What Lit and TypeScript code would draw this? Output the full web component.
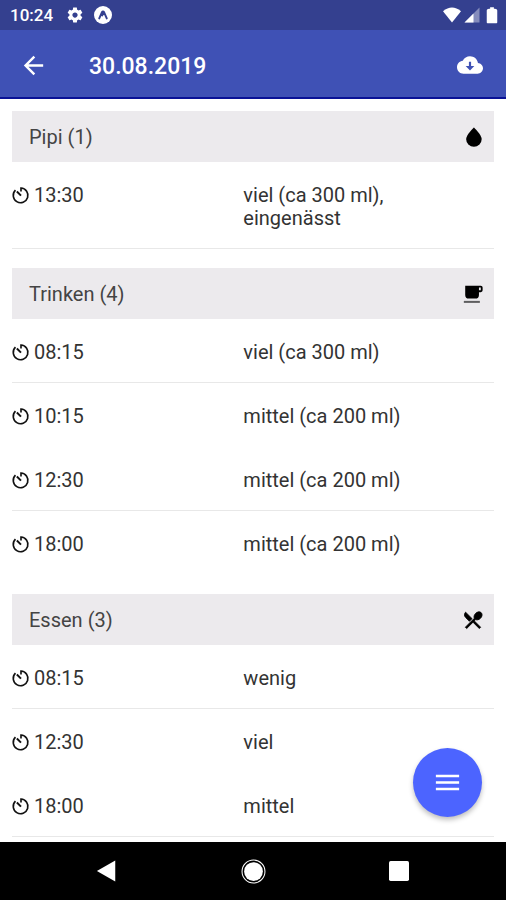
import { LitElement, html, css, svg, TemplateResult } from "lit";
import { customElement, property } from "lit/decorators.js";

interface Entry {
  time: string;
  value: string;
}

interface Section {
  title: string;
  icon: string;
  entries: Entry[];
}

const sections: Section[] = [
  {
    title: "Pipi",
    icon: "drop",
    entries: [{ time: "13:30", value: "viel (ca 300 ml), eingenässt" }],
  },
  {
    title: "Trinken",
    icon: "cup",
    entries: [
      { time: "08:15", value: "viel (ca 300 ml)" },
      { time: "10:15", value: "mittel (ca 200 ml)" },
      { time: "12:30", value: "mittel (ca 200 ml)" },
      { time: "18:00", value: "mittel (ca 200 ml)" },
    ],
  },
  {
    title: "Essen",
    icon: "cutlery",
    entries: [
      { time: "08:15", value: "wenig" },
      { time: "12:30", value: "viel" },
      { time: "18:00", value: "mittel" },
    ],
  },
];

const glyphs: Record<string, TemplateResult> = {
  drop: svg`<path d="M13 1.500C13 1.500 4.500 9.500 4.500 14.200A8.500 8.300 0 0 0 21.500 14.200C21.500 9.500 13 1.500 13 1.500Z"/>`,
  cup: svg`<path fill-rule="evenodd" d="M3.500 3H20.500a2 2 0 0 1 2 2v3a2 2 0 0 1-2 2H18.500v3a4 4 0 0 1-4 4H7.500a4 4 0 0 1-4-4zM18.500 5v3h2V5z"/><path opacity="0.600" d="M2 19.500h17.500v2.200H2z"/>`,
  cutlery: svg`<path stroke="currentColor" stroke-width="1" d="M8.100 13.340l2.830-2.830L3.910 3.500c-1.560 1.560-1.560 4.090 0 5.660l4.190 4.180zm6.780-1.810c1.530.71 3.680.21 5.270-1.380 1.910-1.910 2.280-4.650.81-6.120-1.460-1.460-4.200-1.100-6.120.81-1.590 1.590-2.090 3.740-1.380 5.270L3.700 19.870l1.410 1.410L12 14.410l6.880 6.880 1.410-1.410L13.410 13l1.470-1.470z"/>`,
  timer: svg`<g fill="none" stroke="currentColor" stroke-width="2.200"><path d="M4.600 4.200A9.800 9.800 0 1 0 12 1.400V6"/><path stroke-width="2.600" d="M6.500 6L12 11.500"/></g>`,
  back: svg`<path d="M20 11H7.830l5.590-5.590L12 4l-8 8 8 8 1.410-1.410L7.830 13H20v-2z"/>`,
  cloud: svg`<path fill-rule="evenodd" d="M19.350 10.040C18.670 6.590 15.640 4 12 4 9.110 4 6.600 5.640 5.350 8.040 2.340 8.360 0 10.910 0 14c0 3.310 2.690 6 6 6h13c2.760 0 5-2.240 5-5 0-2.640-2.050-4.780-4.650-4.960zM11 9h2v4h3l-4 4-4-4h3z"/>`,
  menu: svg`<path d="M3 18h18v-2H3v2zm0-5h18v-2H3v2zm0-7v2h18V6H3z"/>`,
  gear: svg`<path d="M19.430 12.980c.04-.32.07-.64.07-.98s-.03-.66-.07-.98l2.110-1.650c.19-.15.24-.42.12-.64l-2-3.460c-.12-.22-.39-.3-.61-.22l-2.490 1c-.52-.4-1.080-.73-1.690-.98l-.38-2.650C14.460 2.180 14.250 2 14 2h-4c-.25 0-.46.18-.49.42l-.38 2.650c-.61.25-1.170.59-1.690.98l-2.490-1c-.23-.09-.49 0-.61.22l-2 3.460c-.13.22-.07.49.12.64l2.110 1.650c-.04.32-.07.65-.07.98s.03.66.07.98l-2.110 1.650c-.19.15-.24.42-.12.64l2 3.460c.12.22.39.3.61.22l2.490-1c.52.4 1.080.73 1.690.98l.38 2.650c.03.24.24.42.49.42h4c.25 0 .46-.18.49-.42l.38-2.650c.61-.25 1.170-.59 1.690-.98l2.490 1c.23.09.49 0 .61-.22l2-3.460c.12-.22.07-.49-.12-.64l-2.110-1.650zM12 15.500c-1.930 0-3.500-1.570-3.500-3.500s1.570-3.500 3.500-3.500 3.500 1.570 3.500 3.500-1.570 3.500-3.500 3.500z"/>`,
  badge: svg`<circle cx="12" cy="12" r="12"/><path fill="none" stroke="#34408f" stroke-width="2.600" stroke-linecap="round" stroke-linejoin="round" d="M7 16.500L10.500 8.500Q12 6 13.500 8.500L17 16.500M11 12.500L12 10"/>`,
  wifi: svg`<path d="M0 7Q12-3 24 7L12 22z"/>`,
  signal: svg`<path opacity="0.400" d="M2 22H22V2z"/><path d="M2 22H14V10z"/>`,
  battery: svg`<path d="M16 3.500h-1.500V1.500h-5v2H8C6.500 3.500 5 4.500 5 6v15.500c0 1 .5 1.500 1.500 1.500h11c1 0 1.500-.5 1.500-1.500V6c0-1.500-1.500-2.500-3-2.500z"/>`,
  navBack: svg`<path d="M1 12L21 0.500V23.500z"/>`,
  navHome: svg`<circle cx="12" cy="12" r="9"/><circle cx="12" cy="12" r="11" fill="none" stroke="currentColor" stroke-width="1"/>`,
  navRecent: svg`<rect x="0" y="0" width="24" height="24" rx="2"/>`,
};

@customElement("ui-icon")
export class UiIcon extends LitElement {
  @property() name = "";

  static styles = css`
    :host {
      display: block;
      flex: none;
    }
    .glyph {
      display: block;
      width: 100%;
      height: 100%;
      fill: currentColor;
    }
  `;

  render() {
    return html`<svg class="glyph" viewBox="0 0 24 24" aria-hidden="true">${glyphs[this.name]}</svg>`;
  }
}

@customElement("app-root")
export class AppRoot extends LitElement {
  static styles = css`
    :host {
      display: flex;
      flex-direction: column;
      height: 100vh;
      overflow: hidden;
      background: #fff;
      color: #333;
      font-family: Roboto, "Noto Sans", sans-serif;
      font-size: 20px;
      line-height: 23px;
    }
    button {
      display: flex;
      align-items: center;
      justify-content: center;
      padding: 0;
      border: 0;
      background: none;
      color: inherit;
      cursor: pointer;
    }
    .status {
      flex: none;
      display: flex;
      align-items: center;
      gap: 10px;
      height: 30px;
      padding: 0 5px 0 10px;
      background: #34408f;
      color: #fff;
      font-size: 17px;
      font-weight: 500;
    }
    .time {
      margin-right: 3px;
    }
    .right {
      display: flex;
      align-items: center;
      gap: 2px;
      margin-left: auto;
    }
    .icon-status {
      width: 18px;
      height: 18px;
    }
    .bar {
      flex: none;
      display: flex;
      align-items: center;
      padding: 3px 23px 0 19px;
      height: 64px;
      border-bottom: 2px solid #0a1296;
      background: #3f51b5;
      color: #fff;
    }
    .title {
      flex: 1;
      margin: 0 0 0 41px;
      padding-top: 4px;
      font-size: 23px;
      line-height: 28px;
      font-weight: 500;
    }
    .icon-bar {
      width: 29px;
      height: 29px;
    }
    .icon-cloud {
      width: 26px;
      height: 26px;
    }
    .body {
      position: relative;
      flex: 1;
      min-height: 0;
      display: flex;
      flex-direction: column;
    }
    .list {
      flex: 1;
      min-height: 0;
      overflow: hidden;
      padding: 12px 12px 0;
    }
    .section {
      margin-bottom: 19px;
    }
    .head {
      display: flex;
      align-items: center;
      justify-content: space-between;
      padding: 13px 10px 13px 17px;
      background: #eceaed;
    }
    .name {
      margin: 0;
      padding-top: 2px;
      font-size: 20px;
      font-weight: 400;
      color: #444;
    }
    .icon-head {
      width: 22px;
      height: 22px;
      color: #000;
    }
    .entries {
      width: 100%;
      table-layout: fixed;
      border-spacing: 0;
    }
    .entries th,
    .entries td {
      box-sizing: border-box;
      padding: 22px 24px 18px 0;
      border-bottom: 1px solid transparent;
      font-weight: 400;
      text-align: left;
      vertical-align: top;
    }
    .entries tr:nth-child(odd) > * {
      border-bottom-color: #e8e8e8;
    }
    .entries th {
      width: 48%;
    }
    .when {
      display: flex;
      align-items: center;
      gap: 4px;
    }
    .icon-time {
      width: 18px;
      height: 18px;
      color: #111;
    }
    .fab {
      position: absolute;
      right: 24px;
      bottom: 25px;
      width: 69px;
      height: 69px;
      border-radius: 50%;
      background: #4c64ff;
      color: #fff;
      box-shadow: 0 3px 5px rgba(0, 0, 0, 0.25);
    }
    .icon-menu {
      width: 31px;
      height: 31px;
    }
    .nav {
      flex: none;
      display: flex;
      justify-content: center;
      height: 58px;
      background: #000;
      color: #fff;
    }
    .key {
      width: 146px;
    }
    .icon-key {
      width: 22px;
      height: 22px;
    }
    .icon-home {
      width: 25px;
      height: 25px;
    }
    .icon-recent {
      width: 20px;
      height: 20px;
    }
  `;

  private renderSection(section: Section) {
    return html`
      <section class="section">
        <div class="head">
          <h2 class="name">${section.title} (${section.entries.length})</h2>
          <ui-icon class="icon-head" name=${section.icon}></ui-icon>
        </div>
        <table class="entries" aria-label=${section.title}>
          <tbody>
            ${section.entries.map(
              (entry) => html`
                <tr>
                  <th scope="row">
                    <span class="when"><ui-icon class="icon-time" name="timer"></ui-icon>${entry.time}</span>
                  </th>
                  <td>${entry.value}</td>
                </tr>
              `
            )}
          </tbody>
        </table>
      </section>
    `;
  }

  render() {
    return html`
      <div class="status">
        <span class="time">10:24</span>
        <ui-icon class="icon-status" name="gear"></ui-icon>
        <ui-icon class="icon-status" name="badge"></ui-icon>
        <span class="right">
          <ui-icon class="icon-status" name="wifi"></ui-icon>
          <ui-icon class="icon-status" name="signal"></ui-icon>
          <ui-icon class="icon-status" name="battery"></ui-icon>
        </span>
      </div>
      <header class="bar">
        <button aria-label="Zurück"><ui-icon class="icon-bar" name="back"></ui-icon></button>
        <h1 class="title">30.08.2019</h1>
        <button aria-label="Herunterladen"><ui-icon class="icon-cloud" name="cloud"></ui-icon></button>
      </header>
      <div class="body">
        <main class="list">${sections.map((section) => this.renderSection(section))}</main>
        <button class="fab" aria-label="Menü"><ui-icon class="icon-menu" name="menu"></ui-icon></button>
      </div>
      <nav class="nav" aria-label="System">
        <button class="key" aria-label="Zurück"><ui-icon class="icon-key" name="navBack"></ui-icon></button>
        <button class="key" aria-label="Startbildschirm"><ui-icon class="icon-home" name="navHome"></ui-icon></button>
        <button class="key" aria-label="Übersicht"><ui-icon class="icon-recent" name="navRecent"></ui-icon></button>
      </nav>
    `;
  }
}
